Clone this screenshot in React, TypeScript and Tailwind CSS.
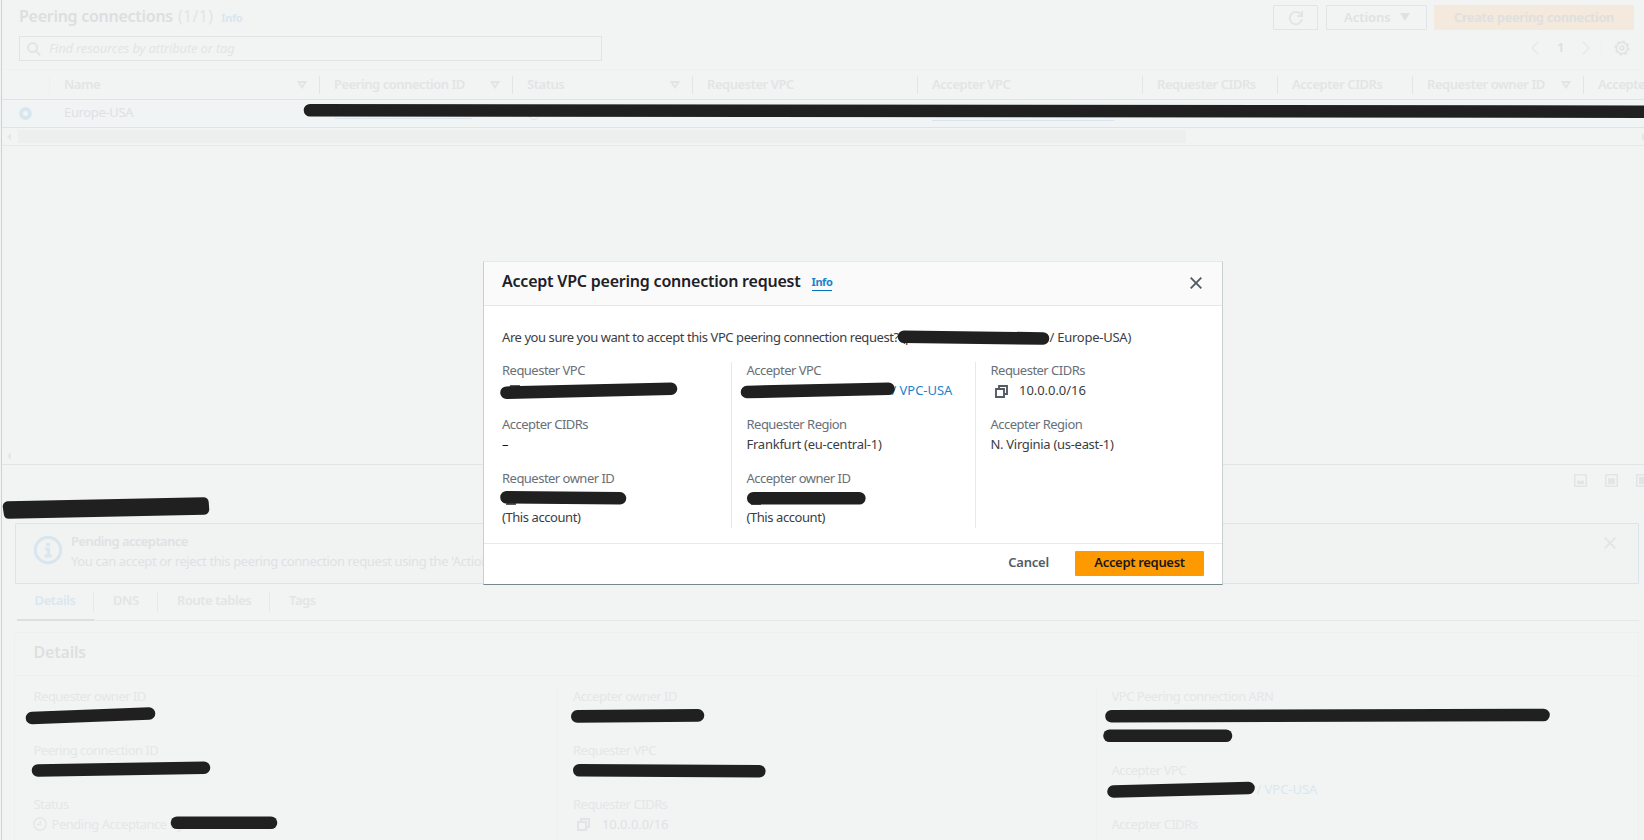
import type { ReactNode } from "react";

const FONT = "[font-family:'Noto_Sans','Open_Sans',sans-serif]";

function CopyIcon({ className = "" }: { className?: string }) {
  return (
    <svg viewBox="0 0 13 13" className={`size-[13px] shrink-0 ${className}`} fill="none" stroke="currentColor" strokeWidth="1.9">
      <path d="M1 4h8v8H1z" />
      <path d="M4 3.2V1h8v8H9.8" />
    </svg>
  );
}

function CloseIcon({ className = "" }: { className?: string }) {
  return (
    <svg viewBox="0 0 12 12" className={`size-3 ${className}`} fill="none" stroke="currentColor" strokeWidth="1.9">
      <path d="M.7.7l10.6 10.6M11.3.7L.7 11.3" />
    </svg>
  );
}

function SortIcon() {
  return (
    <svg viewBox="0 0 10 8" className="h-2 w-[10px]" fill="none" stroke="currentColor" strokeWidth="1.9">
      <path d="M1.4 1h7.2L5 6.4z" />
    </svg>
  );
}

function PanelIcon({ level }: { level: number }) {
  return (
    <svg viewBox="0 0 13 13" className="size-[13px] shrink-0 text-[#e2e4e5]" fill="none">
      <path d="M.8.8h11.4v11.4H.8z" stroke="currentColor" strokeWidth="1.6" />
      <rect x="3" y={10.2 - level} width="7" height={level} fill="currentColor" />
    </svg>
  );
}

function ScrollArrow({ flip = false }: { flip?: boolean }) {
  return (
    <svg viewBox="0 0 4 8" className="h-2 w-1" fill="#e4e6e7">
      <path d={flip ? "M0 0l4 4-4 4z" : "M4 0v8L0 4z"} />
    </svg>
  );
}

type Column = { label: string; width: string; sort?: boolean };

const columns: Column[] = [
  { label: "Name", width: "w-[270px]", sort: true },
  { label: "Peering connection ID", width: "w-[193px]", sort: true },
  { label: "Status", width: "w-[180px]", sort: true },
  { label: "Requester VPC", width: "w-[225px]" },
  { label: "Accepter VPC", width: "w-[225px]" },
  { label: "Requester CIDRs", width: "w-[135px]" },
  { label: "Accepter CIDRs", width: "w-[135px]" },
  { label: "Requester owner ID", width: "w-[171px]", sort: true },
  { label: "Accepter owner ID", width: "w-[180px]" },
];

function Field({ label, children, className = "" }: { label: string; children?: ReactNode; className?: string }) {
  return (
    <div className={className}>
      <div className="h-5 tracking-[-0.52px]">{label}</div>
      {children}
    </div>
  );
}

function ListPanel() {
  return (
    <section className="h-[465px] shrink-0 border-b border-[#e2e5e5]">
      <div className="flex h-[34px] items-start pt-[5px] pr-[10px] pl-[17px]">
        <h1 className="-mt-px flex items-baseline text-base leading-6 font-semibold tracking-[-0.27px] text-[#dcdee0]">
          Peering connections
          <span className="ml-[5px] font-normal tracking-[0.3px] text-[#e2e4e5]">(1/1)</span>
          <span className="ml-[8px] text-[11px] font-bold tracking-[-0.4px] text-[#dae6ee]">Info</span>
        </h1>
        <div className="ml-auto flex leading-[18px] font-semibold text-[#dfe1e3]">
          <div className="grid h-[25px] w-[45px] place-items-center rounded-[1px] border border-[#e1e4e5]">
            <svg viewBox="0 0 16 16" className="size-4" fill="none" stroke="#e1e3e4" strokeWidth="1.8">
              <path d="M14 9.2A6.2 6.2 0 1 1 12.6 4L14 5.6" />
              <path d="M14.2 1v5H9.6" />
            </svg>
          </div>
          <div className="ml-2 flex h-[25px] w-[101px] items-center rounded-[1px] border border-[#e1e4e5] pb-px pl-[17px] tracking-[-0.05px]">
            Actions
            <svg viewBox="0 0 10 8" className="ml-[9px] h-2 w-[10px]" fill="currentColor">
              <path d="M0 0h10L5 8z" />
            </svg>
          </div>
          <div className="ml-[7px] grid h-[25px] w-[200px] place-items-center rounded-[1px] bg-[#f3e9dc] pb-px tracking-[-0.32px] text-[#dfdfdf]">
            Create peering connection
          </div>
        </div>
      </div>
      <div className="flex h-9 items-start border-b border-[#eff1f1] pt-[2px] pl-[17px]">
        <div className="flex h-[25px] w-[583px] items-center border border-[#e1e4e5] pl-[7px] text-[#e2e4e5] italic">
          <svg viewBox="0 0 14 14" className="mr-[8px] size-[14px]" fill="none" stroke="currentColor" strokeWidth="2">
            <circle cx="5.6" cy="5.6" r="4.5" />
            <path d="M9 9l4.2 4.2" />
          </svg>
          <span className="tracking-[-0.18px]">Find resources by attribute or tag</span>
        </div>
        <div className="ml-auto flex h-6 items-center pr-[14px] text-[#e6e8e9]">
          <svg viewBox="0 0 8 14" className="h-[14px] w-2" fill="none" stroke="currentColor" strokeWidth="1.5">
            <path d="M7.2.7L1 7l6.2 6.3" />
          </svg>
          <span className="w-[43px] text-center font-semibold text-[#dcdee0]">1</span>
          <svg viewBox="0 0 8 14" className="h-[14px] w-2" fill="none" stroke="currentColor" strokeWidth="1.5">
            <path d="M.8.7L7 7 .8 13.3" />
          </svg>
          <span className="mr-[12px] ml-[11px] h-6 w-px bg-[#eff1f1]" />
          <svg viewBox="0 0 16 16" className="size-4 text-[#e0e3e4]" fill="none" stroke="currentColor">
            <circle cx="8" cy="8" r="5.6" strokeWidth="1.6" />
            <circle cx="8" cy="8" r="6.8" strokeWidth="1.6" strokeDasharray="2.67 2.67" />
            <circle cx="8" cy="8" r="1.9" strokeWidth="1.5" />
          </svg>
        </div>
      </div>
      <div className="flex h-[29px] items-center overflow-hidden pl-[47px] font-semibold tracking-[-0.46px] text-[#e2e4e5]">
        {columns.map((c, i) => (
          <div
            key={c.label}
            className={`flex h-[18px] shrink-0 items-center justify-between border-l pr-[12px] pl-[14px] whitespace-nowrap ${i === 0 ? "border-[#eef0f0]" : "border-[#e2e5e5]"} ${c.width}`}
          >
            <span>{c.label}</span>
            {c.sort && <SortIcon />}
          </div>
        ))}
      </div>
      <div className="flex h-[29px] items-center border-y border-[#d9e5eb] bg-[#f1f4f4] pl-[17px]">
        <span className="size-[13px] shrink-0 rounded-full border-4 border-[#dae6ee]" />
        <span className="-mt-[2px] ml-[32px] w-[271px] shrink-0 tracking-[-0.35px] text-[#dfe1e3]">Europe-USA</span>
        <span className="-mt-[3px] h-[14px] w-[137px] border-b border-[#d9e6ef]" />
        <span className="mt-[1px] ml-[56px] size-[12px] rounded-full border border-[#dfe2e3]" />
        <span className="mt-px ml-[392px] h-[14px] w-[182px] border-b border-[#d5e4ef]" />
      </div>
      <div className="flex h-[18px] items-center overflow-hidden border-b border-[#e6e9e9] pl-[5px]">
        <ScrollArrow />
        <span className="ml-[7px] h-[13px] w-[1168px] bg-[#ecefee]" />
        <span className="-mr-[2px] ml-auto">
          <ScrollArrow flip />
        </span>
      </div>
      <div className="mt-[306px] pl-[5px]">
        <ScrollArrow />
      </div>
    </section>
  );
}

function InfoBanner() {
  return (
    <div className="mr-[5px] ml-[13px] flex h-[61px] shrink-0 rounded-[1px] border border-[#d8e5ee] bg-[#f1f3f3] pl-[17px] text-[#dfe1e3]">
      <svg viewBox="0 0 30 30" className="mt-[11px] size-[30px] text-[#dae6ee]" fill="none" stroke="currentColor">
        <circle cx="15" cy="15" r="12.7" strokeWidth="3.2" />
        <path d="M13 9.5h4.2M12 14h3.6v6.6M11.4 21h7.4" strokeWidth="3" />
      </svg>
      <div className="mt-[7px] ml-[8px] leading-5">
        <div className="font-semibold tracking-[-0.58px]">Pending acceptance</div>
        <div className="tracking-[-0.39px]">
          You can accept or reject this peering connection request using the 'Actions' menu.
        </div>
      </div>
      <CloseIcon className="mt-[13px] mr-[22px] ml-auto text-[#e2e4e5]" />
    </div>
  );
}

function Tabs() {
  return (
    <div className="mr-[5px] ml-[15px] flex h-[37px] shrink-0 border-b border-[#e6e9e9] font-semibold text-[#e2e4e5]">
      <div className="relative flex w-[76px] items-start justify-center pt-[7px] text-[#dbe7ef] after:absolute after:-right-px after:-bottom-px after:left-0 after:h-[2px] after:bg-[#dcdfdf]">
        Details
      </div>
      <div className="mt-2 h-5 w-[64px] border-l border-[#e6e9e9] pl-[19px]">
        <span className="relative -top-px">DNS</span>
      </div>
      <div className="mt-2 h-5 w-[112px] border-l border-[#e6e9e9] pl-[19px] tracking-[-0.45px]">
        <span className="relative -top-px">Route tables</span>
      </div>
      <div className="mt-2 h-5 border-l border-[#e6e9e9] pl-[19px]">
        <span className="relative -top-px">Tags</span>
      </div>
    </div>
  );
}

function DetailsPanel() {
  return (
    <section className="mt-[11px] mr-[5px] ml-3 h-[300px] border border-[#eef0f0] text-[#e4e6e7]">
      <h2 className="h-[43px] border-b border-[#eef0f0] pt-[7px] pl-[18.5px] text-base leading-6 font-semibold tracking-[-0.2px] text-[#dddfe1]">
        Details
      </h2>
      <div className="flex h-[240px] pt-[11px] leading-[18px]">
        <div className="w-[542px] pl-[18.5px]">
          <Field label="Requester owner ID" className="h-[54px]" />
          <Field label="Peering connection ID" className="h-[54px]" />
          <Field label="Status">
            <div className="flex h-[18px] items-center">
              <svg viewBox="0 0 14 14" className="-ml-px mr-[5px] size-[14px]" fill="none" stroke="currentColor" strokeWidth="1.5">
                <circle cx="7" cy="7" r="6.2" />
                <path d="M7.3 3.2v4.4H4" />
              </svg>
              <span className="tracking-[-0.47px]">Pending Acceptance by</span>
            </div>
          </Field>
        </div>
        <div className="w-[539px] border-l border-[#eff1f1] pl-[15px]">
          <Field label="Accepter owner ID" className="h-[54px]" />
          <Field label="Requester VPC" className="h-[54px]" />
          <Field label="Requester CIDRs">
            <div className="flex h-[18px] items-center gap-[12px] pl-1">
              <CopyIcon className="text-[#e1e3e5]" />
              <span className="tracking-[-0.08px] text-[#dfe1e3]">10.0.0.0/16</span>
            </div>
          </Field>
        </div>
        <div className="border-l border-[#eff1f1] pl-[14.5px]">
          <Field label="VPC Peering connection ARN" className="h-[74px]" />
          <Field label="Accepter VPC" className="h-[54px]">
            <div className="-mt-px pl-[145px] tracking-[-0.05px] text-[#dbe7ef]">/ VPC-USA</div>
          </Field>
          <Field label="Accepter CIDRs" />
        </div>
      </div>
    </section>
  );
}

function AcceptDialog() {
  return (
    <div className="absolute top-[261px] left-[483px] flex h-[324px] w-[740px] flex-col border border-t-[#e4e9e9] border-r-[#c8d0d2] border-b-[#76898f] border-l-[#c8d0d2] bg-white text-[#3a3d43]">
      <header className="flex h-[44px] shrink-0 items-start border-b border-[#e6e9e9] bg-[#fafafa] pr-[20px] pl-[18px]">
        <h2 className="mt-[7px] text-base leading-6 font-semibold tracking-[-0.22px] text-[#1d2026]">
          Accept VPC peering connection request
        </h2>
        <span className="mt-[12px] ml-[11px] h-[17px] border-b border-[#0073bb] text-[11px] leading-[16px] font-bold tracking-[-0.45px] text-[#1b84cc]">
          Info
        </span>
        <CloseIcon className="mt-[15px] ml-auto text-[#545b64]" />
      </header>
      <div className="h-[238px] shrink-0 border-b border-[#e6e9e9] pt-[21px]">
        <div className="flex h-5 pl-[18px] leading-5 whitespace-pre">
          <span className="w-[547.5px]">Are you sure you want to accept this VPC peering connection request? (p</span>
          <span className="tracking-[-0.25px]">/ Europe-USA)</span>
        </div>
        <div className="mt-[15px] flex h-[166px] leading-4">
          <div className="w-[247px] pl-[18px]">
            <Field label="Requester VPC" className="h-[54px] text-[#687078]">
              <CopyIcon className="mt-[3px] ml-[5px] text-[#545b64]" />
            </Field>
            <Field label="Accepter CIDRs" className="h-[54px] text-[#687078]">
              <div className="text-[#16191f]">–</div>
            </Field>
            <Field label="Requester owner ID" className="text-[#687078]">
              <CopyIcon className="mt-[2px] mb-[4px] ml-[4px] text-[#545b64]" />
              <div className="text-[#3a3d43]">(This account)</div>
            </Field>
          </div>
          <div className="w-[244px] border-l border-[#e6e9e9] pl-[14.5px]">
            <Field label="Accepter VPC" className="h-[54px] text-[#687078]">
              <div className="pl-[145px] tracking-[-0.05px] text-[#1b84cc]">/ VPC-USA</div>
            </Field>
            <Field label="Requester Region" className="h-[54px] text-[#687078]">
              <div className="tracking-[-0.25px] text-[#3a3d43]">Frankfurt (eu-central-1)</div>
            </Field>
            <Field label="Accepter owner ID" className="text-[#687078]">
              <CopyIcon className="mt-[2px] mb-[4px] ml-[4px] text-[#545b64]" />
              <div className="text-[#3a3d43]">(This account)</div>
            </Field>
          </div>
          <div className="border-l border-[#e6e9e9] pl-[14.5px]">
            <Field label="Requester CIDRs" className="h-[54px] text-[#687078]">
              <div className="flex h-4 items-center gap-[11.5px] pl-1">
                <CopyIcon className="mt-[2px] text-[#545b64]" />
                <span className="tracking-[-0.05px] text-[#3a3d43]">10.0.0.0/16</span>
              </div>
            </Field>
            <Field label="Accepter Region" className="text-[#687078]">
              <div className="tracking-[-0.3px] text-[#3a3d43]">N. Virginia (us-east-1)</div>
            </Field>
          </div>
        </div>
      </div>
      <footer className="flex flex-1 items-center justify-end pr-[18px] leading-[19px] font-semibold">
        <span className="mb-[3px] tracking-[-0.2px] text-[#545b64]">Cancel</span>
        <span className="mb-[2px] ml-[26px] grid h-[25px] w-[129px] place-items-center rounded-[1px] bg-[#ff9900] pb-[2px] tracking-[-0.32px] text-[#16191f]">
          Accept request
        </span>
      </footer>
    </div>
  );
}

const strokes: [number, number, number, number][] = [
  [310, 110.3, 1650, 111.7],
  [904, 336.8, 1043, 338.5],
  [506.5, 392.7, 671, 388.7],
  [747, 392, 888.5, 388.8],
  [506.5, 497.3, 620, 498.3],
  [753.3, 498.2, 859.3, 498.2],
  [32, 718, 149, 713.5],
  [38, 770.5, 204, 767.7],
  [177, 822.7, 271, 822.7],
  [577.3, 716.4, 698, 715.4],
  [579.3, 770.3, 759.3, 771.3],
  [1111.5, 716.3, 1543.5, 715],
  [1109.5, 735.7, 1226, 735.7],
  [1113.5, 791.5, 1248.5, 788],
];

function MarkerStrokes() {
  return (
    <svg viewBox="0 0 1644 840" className="pointer-events-none absolute inset-0 h-[840px] w-[1644px]" stroke="#202020" fill="#202020">
      {strokes.map(([x1, y1, x2, y2]) => (
        <line key={`${x1}-${y1}`} x1={x1} y1={y1} x2={x2} y2={y2} strokeWidth="12.6" strokeLinecap="round" />
      ))}
      <path d="M8 506.5L203.5 502.5L204 509.5L9 513.5z" strokeWidth="10.5" strokeLinejoin="round" />
    </svg>
  );
}

export default function App() {
  return (
    <div className={`relative h-[840px] w-[1644px] overflow-hidden bg-[#f2f4f4] text-[13px] tracking-[-0.43px] ${FONT}`}>
      <main className="ml-px flex h-full flex-col border-l border-[#cdd1d1]">
        <ListPanel />
        <div className="flex h-[58px] shrink-0 items-start justify-end gap-[18px] overflow-hidden pt-[9px]">
          <PanelIcon level={3.5} />
          <PanelIcon level={6} />
          <span className="w-2 overflow-hidden">
            <PanelIcon level={7.4} />
          </span>
        </div>
        <InfoBanner />
        <Tabs />
        <DetailsPanel />
      </main>
      <AcceptDialog />
      <MarkerStrokes />
    </div>
  );
}
